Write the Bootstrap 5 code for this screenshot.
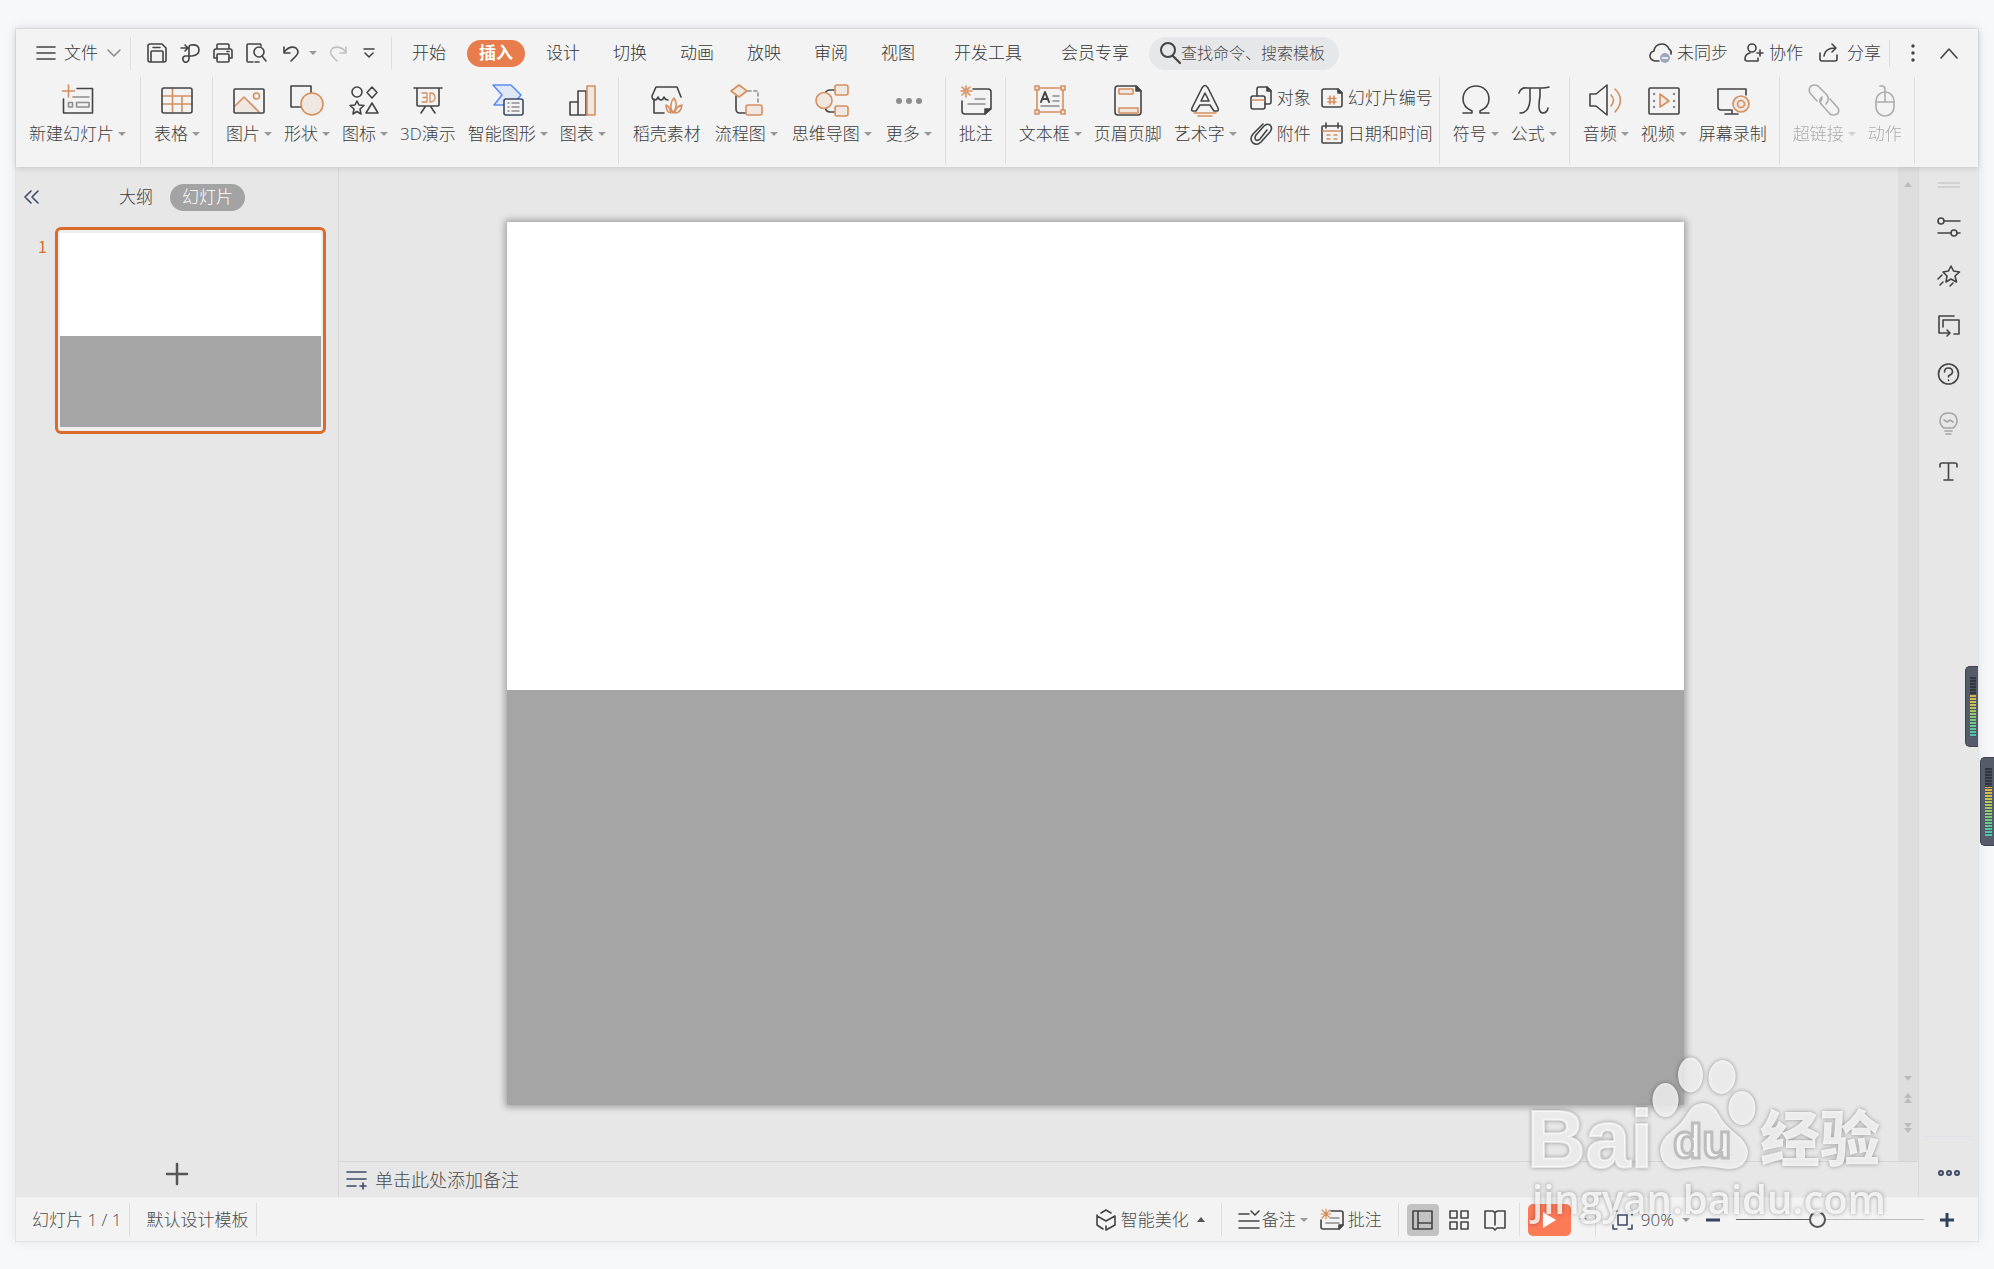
<!DOCTYPE html>
<html lang="zh-CN">
<head>
<meta charset="utf-8">
<meta name="viewport" content="width=device-width, initial-scale=1">
<title>演示文稿</title>
<link href="https://cdn.jsdelivr.net/npm/bootstrap@5.3.0/dist/css/bootstrap.min.css" rel="stylesheet">
<style>
:root{--ink:#3c3c3c;--line:#dedede;--bar:#f3f3f3;--pane:#e7e7e7;--accent:#e87c4c;--o:#d4905f;--navy:#3d4a66}
body{font-family:"Open Sans","Noto Sans CJK SC",sans-serif;font-weight:300;font-size:17px;line-height:24px;color:var(--ink);background:#f7f8fa;min-height:100vh;padding:28px 15px 27px;position:relative}
.app{border:1px solid #e2e3e4;box-shadow:0 0 12px rgba(0,0,0,.08);background:var(--pane);position:relative}
svg{display:block;flex:none;overflow:visible}
.ic{fill:none;stroke:#444;stroke-width:1.6;stroke-linecap:round;stroke-linejoin:round}
.ic .o{stroke:var(--o)} .ic .of{stroke:var(--o);fill:#f1e7e1} .ic .g{stroke:#8d8d8d} .ic .k{fill:#444}
.plain{--bs-btn-padding-x:0;--bs-btn-padding-y:0;--bs-btn-border-width:0;--bs-btn-color:var(--ink);--bs-btn-line-height:24px;--bs-btn-font-size:17px;--bs-btn-font-weight:300;--bs-btn-border-radius:4px;--bs-btn-hover-color:#222;display:flex;align-items:center;white-space:nowrap}
.caret{width:0;height:0;border:4px solid transparent;border-top-color:#999;border-bottom-width:0;flex:none}
.caret.up{border:4px solid transparent;border-bottom:5px solid #555;border-top:0}
.vline{width:1px;background:var(--line);flex:none}
.head{background:var(--bar);box-shadow:0 1px 6px rgba(0,0,0,.14);position:relative;z-index:2}
.toprow{height:48px}
.quick{gap:12px}
.tabs{gap:9px}
.tabs .nav-link{padding:1px 12px 2px;color:#333;border-radius:14px;line-height:24px;white-space:nowrap}
.tabs .nav-link.active{background:var(--accent);color:#fff;font-weight:700}
.tabs .wide{margin-left:6px}
.finder{background:#e6e7e9;border-radius:17px;height:33px;width:190px;padding-left:10px}
.finder input{font-size:16px;font-weight:300;width:156px;padding:0;border:0;background:none;min-width:0;outline:0;color:#555}
input::placeholder{color:#4a4a4a;opacity:1}
.ribbon{height:90px}
.grp{display:flex;padding:0 6px 0 7px;border-right:1px solid var(--line);height:87px}
.tool{flex-direction:column;padding:7px 6px 0;gap:6px;justify-content:flex-start}
.roomy .tool{padding:7px 7px 0}
.tool>span{display:flex;align-items:center;gap:4px}
.off{opacity:.4}
.pair{display:grid;grid-template-columns:auto auto;column-gap:10px;align-content:start;padding:9px 0 0 7px;row-gap:12px}
.pair .btn{gap:5px}
.side{width:323px;border-right:1px solid #d8d8d8}
.sidehead{height:60px}
.collapse-box{width:103px;padding-left:8px}
.pill{background:#a3a3a3;color:#fff;border-radius:14px;padding:1px 12px 2px;margin-left:17px;--bs-btn-color:#fff}
.num{width:39px;color:#d96c2c;padding:7px 8px 0 0;text-align:right;font-family:"Noto Sans CJK SC",sans-serif;font-size:16px;font-weight:400}
.thumb{border:3px solid #d96b2b;border-radius:6px;padding:3px 2px 4px;aspect-ratio:271/207;margin-right:12px;background:#eee}
.top-half{background:#fff;flex:53}.low-half{background:#a5a5a5;flex:47}
.stage{padding:55px 214px 56px 168px}
.slide{box-shadow:0 0 7px 2px rgba(0,0,0,.32)}
.scroller{width:20px;background:#dedede;padding:15px 0 28px}
.scroller i{border:4px solid transparent;display:block}
.scroller .u{border-bottom:5px solid #bbb;border-top:0}.scroller .d{border-top:5px solid #bbb;border-bottom:0}
.memo{height:36px;border-top:1px solid #d5d5d5;padding-left:7px;gap:8px}
.memo input{background:none;border:0;padding:0;font-size:18px;font-weight:300;line-height:26px;outline:0}
.rail{width:60px;border-left:1px solid #d8d8d8;padding-top:15px}
.rail .lst{gap:27px;margin-top:28px}
.status{background:var(--bar);height:44px;color:#4a4a4a;border-top:1px solid #eee}
.status .plain{--bs-btn-color:#4a4a4a}
.status .vline,.toprow .vline{height:33px}
.toprow .shortline{height:27px}
.viewbtn{width:32px;height:32px;justify-content:center}
.viewbtn.on{background:#c2c2c2}
.playbtn{width:43px;height:32px;background:#fd7a57;justify-content:center;border-radius:5px}
.zoomer{appearance:none;width:188px;height:18px;background:linear-gradient(#bbb,#bbb) 0 50%/100% 1px no-repeat;margin:0}
.zoomer::-webkit-slider-runnable-track{height:18px;background:linear-gradient(#666,#666) 0 50%/73px 1px no-repeat}
.zoomer::-webkit-slider-thumb{appearance:none;width:17px;height:17px;border:2px solid #555;border-radius:50%;background:#f3f3f3}
.meter-a,.meter-b{position:absolute;right:0;background:#565b6a;border:1px solid #3e424e;border-right:0;border-radius:5px 0 0 5px;padding:10px 2px 9px 4px;z-index:3}
.meter-a{top:637px;width:13px;height:81px}
.meter-b{top:757px;width:14px;height:89px}
.lamp{height:100%;background:repeating-linear-gradient(transparent 0 2px,#4a5560 2px 3px),linear-gradient(#33363f 0 28%,#dfae45 28%,#c9c552 45%,#84c878 70%,#43c6b4)}
.brand{position:absolute;right:94px;bottom:29px;z-index:4;pointer-events:none;filter:drop-shadow(0 0 2px rgba(0,0,0,.45))}
</style>
</head>
<body class="d-flex flex-column">
<div class="app d-flex flex-column flex-grow-1">
<header class="head">
 <div class="toprow d-flex align-items-center">
  <button class="btn plain ms-3"><svg class="ic ms-1 me-2" width="20" height="16"><path d="M1 2h18M1 8h18M1 14h18"/></svg>文件<svg class="ic ms-2" width="16" height="10"><path class="g" d="M2 2l6 6 6-6"/></svg></button>
  <div class="vline ms-2 me-2"></div>
  <div class="quick d-flex align-items-center ms-2">
   <button class="btn plain" aria-label="保存"><svg class="ic" width="21" height="20"><path d="M3 1h12l4 4v12q0 2-2 2H3q-2 0-2-2V3q0-2 2-2zM4 19V9q0-1 1-1h10q1 0 1 1v10M6 4.500h7"/></svg></button>
   <button class="btn plain" aria-label="输出"><svg class="ic" width="21" height="20"><path d="M1 5h7M5 2l3 3-3 3M11 2q8-1 8 5 0 5-7 6H5q-3 1-2 4 1 3 4 2 2-1 2-3V5q0-3 2-3"/></svg></button>
   <button class="btn plain" aria-label="打印"><svg class="ic" width="21" height="20"><path d="M4 6V2q0-1 1-1h10q1 0 1 1v4M4 15H1V8q0-2 2-2h14q2 0 2 2v7h-3"/><rect x="4" y="11" width="12" height="8" rx="1"/><path d="M14 8.500h2"/></svg></button>
   <button class="btn plain" aria-label="打印预览"><svg class="ic" width="21" height="20"><path d="M7 19H2q-1 0-1-1V2q0-1 1-1h12q1 0 1 1v1"/><circle cx="13" cy="9" r="5"/><path d="M16 13l4 5M9 19h4"/></svg></button>
   <button class="btn plain" aria-label="撤销"><svg class="ic ms-1 me-2" width="18" height="18"><path d="M1 3v6h6M1 8q6-7 12-4 4 4 0 8l-5 5"/></svg><span class="caret"></span></button>
   <button class="btn plain" aria-label="恢复"><svg class="ic opacity-50" width="18" height="18"><path class="g" d="M17 3v6h-6M17 8Q11 1 4 4q-5 4 0 9l4 4"/></svg></button>
   <button class="btn plain ms-1" aria-label="更多"><svg class="ic" width="12" height="12"><path d="M1 2h10M2 6l4 4 4-4"/></svg></button>
  </div>
  <div class="vline ms-3 me-2"></div>
  <nav class="nav nav-pills tabs flex-nowrap">
   <button class="nav-link">开始</button><button class="nav-link active">插入</button><button class="nav-link">设计</button><button class="nav-link">切换</button><button class="nav-link">动画</button><button class="nav-link">放映</button><button class="nav-link">审阅</button><button class="nav-link">视图</button><button class="nav-link wide">开发工具</button><button class="nav-link wide">会员专享</button>
  </nav>
  <label class="finder d-flex align-items-center ms-2"><svg class="ic" width="22" height="22"><circle cx="9" cy="8" r="7" stroke-width="2"/><path d="M14 14l7 7" stroke-width="2.200"/></svg><input type="text" placeholder="查找命令、搜索模板" aria-label="查找命令、搜索模板"></label>
  <div class="d-flex align-items-center ms-auto">
   <button class="btn plain me-3"><svg class="ic me-1" width="24" height="20"><path d="M10 18H6q-5-1-5-5 0-4 4-5 1-7 8-7 5 0 7 5 3 2 2 5"/><circle cx="16" cy="15" r="5" fill="#9fa7bb" stroke="none"/><path d="M13.500 15h5" stroke="#fff"/></svg>未同步</button>
   <button class="btn plain me-3"><svg class="ic me-1" width="21" height="20"><circle cx="8" cy="5" r="4"/><path d="M6 10q-5 1-5 6 0 2 2 2h11v-3M13 10h6M16 7v6"/></svg>协作</button>
   <button class="btn plain"><svg class="ic me-2" width="20" height="20"><path d="M1 10v6q0 2 2 2h13q2 0 2-2v-4M5 13q1-8 11-8M13 1l4 4-4 4"/></svg>分享</button>
   <div class="vline shortline ms-2 me-3"></div>
   <button class="btn plain mx-1" aria-label="菜单"><svg width="6" height="20" fill="#444"><circle cx="3" cy="3" r="1.700"/><circle cx="3" cy="10" r="1.700"/><circle cx="3" cy="17" r="1.700"/></svg></button>
   <button class="btn plain ms-3 me-3" aria-label="收起"><svg class="ic mx-1" width="18" height="12"><path d="M1 11l8-9 8 9"/></svg></button>
  </div>
 </div>
 <div class="ribbon d-flex">
  <div class="grp pe-2"><button class="btn plain tool"><svg class="ic" width="32" height="32"><path d="M15 4.500h15.500V29h-29V15"/><path class="o" d="M6.500 1v12M.500 7h12"/><path class="g" d="M11 13h16M6.500 18.500h4V23h-4zM14.500 18.500H27V23H14.500z"/></svg><span>新建幻灯片<i class="caret"></i></span></button></div>
  <div class="grp"><button class="btn plain tool"><svg class="ic" width="32" height="32"><path class="o" d="M1 12h30M1 20h30M11.500 4v24M21 12v16"/><rect x="1" y="4" width="30" height="25" rx="2"/></svg><span>表格<i class="caret"></i></span></button></div>
  <div class="grp">
   <button class="btn plain tool"><svg class="ic" width="32" height="32"><path d="M1.500 23L11 13l15 15H2z" fill="#f1e7e1" stroke="none"/><path class="o" d="M2 22l9-9 15 15"/><circle class="o" cx="23.500" cy="12" r="3"/><rect x="1" y="5" width="30" height="24" rx="1"/></svg><span>图片<i class="caret"></i></span></button>
   <button class="btn plain tool"><svg class="ic" width="32" height="32"><path d="M0 2h20v21H0z"/><circle class="of" cx="21" cy="20" r="11"/></svg><span>形状<i class="caret"></i></span></button>
   <button class="btn plain tool"><svg class="ic" width="32" height="32"><circle cx="8" cy="8" r="5"/><path d="M23 3l5 5.500-5 5.500-5-5.500zM23 19l6 10H17zM8 17l2 4 5 .500-4 3.500 1 5-4-2.500L4 30l1-5-4-3.500 5-.500z"/></svg><span>图标<i class="caret"></i></span></button>
   <button class="btn plain tool"><svg class="ic" width="32" height="32"><path d="M2 4h28M5 4v17q0 1 1 1h20q1 0 1-1V4M13 23l-4 6M19 23l4 6"/><path class="o" d="M10 9h5v9h-5M11 13.500h4M18 9v9q5 0 5-4.500T18 9z" stroke-width="1.300"/></svg><span>3D演示</span></button>
   <button class="btn plain tool"><svg class="ic" width="32" height="32"><path d="M1 1h18l10 10-9 10H2l8-10z" stroke="#5b8def" fill="#dfe7f5"/><rect x="12" y="15" width="19" height="16" rx="2" stroke="#3d4a66" fill="#f3f3f3"/><path class="g" d="M16 19h1M20 19h7M16 23h1M20 23h7M16 27h1M20 27h7"/></svg><span>智能图形<i class="caret"></i></span></button>
   <button class="btn plain tool"><svg class="ic" width="32" height="32"><path d="M3 31V18h8v13zM11 31V7h8v24z"/><path class="of" d="M20 2h8v29h-8z"/></svg><span>图表<i class="caret"></i></span></button>
  </div>
  <div class="grp roomy">
   <button class="btn plain tool"><svg class="ic" width="32" height="32"><path d="M13 29H3V15M1 12l4-9h21l4 10M1 12q0 4 3 4 2 0 3-3 1 3 3 3t3-3q1 3 4 3"/><path class="o" d="M22 29q-5-8 1-15 5 7-1 15zM20 29q-5-1-5-8 4 2 5 8zM24 29q0-6 7-8-1 8-7 8z"/></svg><span>稻壳素材</span></button>
   <button class="btn plain tool"><svg class="ic" width="32" height="32"><path d="M6 12v13q0 4 4 4h6"/><path class="g" d="M18 7h10v13" stroke-dasharray="3 3"/><path class="of" d="M9 1l8 6-8 6-8-6zM18 21h12q2 0 2 2v6q0 2-2 2H18q-2 0-2-2v-6q0-2 2-2z"/></svg><span>流程图<i class="caret"></i></span></button>
   <button class="btn plain tool"><svg class="ic" width="32" height="32"><path d="M9 10q1-4 5-4h5M9 23q1 5 5 5h5"/><circle class="of" cx="8" cy="16.500" r="8"/><rect class="of" x="19" y="1" width="13" height="10" rx="2"/><rect class="of" x="19" y="22" width="13" height="10" rx="2"/></svg><span>思维导图<i class="caret"></i></span></button>
   <button class="btn plain tool"><svg width="32" height="32" fill="#8d8d8d"><circle cx="6" cy="17" r="3"/><circle cx="16" cy="17" r="3"/><circle cx="26" cy="17" r="3"/></svg><span>更多<i class="caret"></i></span></button>
  </div>
  <div class="grp"><button class="btn plain tool"><svg class="ic" width="32" height="32"><path d="M13 5h15q3 0 3 3v16l-6 6H5q-3 0-3-3V17"/><path class="k" d="M25 30v-5h6z"/><path class="o" d="M6 2v4M6 9v4M1 7h4M8 7h4M2 3l3 3M7 8l3 3M10 3L7 6M5 8l-3 3"/><path class="g" d="M15 15h10M8 20h17"/></svg><span>批注</span></button></div>
  <div class="grp">
   <button class="btn plain tool"><svg class="ic" width="32" height="32"><path class="o" d="M3 4h26v24H3z"/><path class="of" d="M1 2h4v4H1zM27 2h4v4h-4zM1 26h4v4H1zM27 26h4v4h-4z"/><path d="M7 18l4-10 4 10M8 15h6" stroke-width="2"/><path class="g" d="M19 12h6M19 17h6M7 22h18"/></svg><span>文本框<i class="caret"></i></span></button>
   <button class="btn plain tool"><svg class="ic" width="32" height="32"><path d="M6 2h18l5 5v21q0 3-3 3H6q-3 0-3-3V5q0-3 3-3z"/><path class="k" d="M24 2v5h5z"/><path class="of" d="M7 5h14v5H7zM7 24h19v5H7z"/></svg><span>页眉页脚</span></button>
   <button class="btn plain tool"><svg class="ic" width="32" height="32"><path d="M13 4q3-5 6 0l10 20q1 3-1 3h-3l-4-6H11l-4 6H4q-2 0-1-3zM16 9l4 8h-8z"/><path class="o" d="M5 29h22M9 32h14"/></svg><span>艺术字<i class="caret"></i></span></button>
   <div class="pair">
    <button class="btn plain"><svg class="ic" width="22" height="24"><path d="M7 10V3q0-2 2-2h8l4 4v11q0 2-2 2h-4"/><path class="k" d="M17 1v4h4z"/><rect x="1" y="10" width="14" height="13" rx="2"/><path class="o" d="M2 14h12"/></svg>对象</button>
    <button class="btn plain"><svg class="ic" width="22" height="24"><path d="M3 3h14l4 4v12q0 2-2 2H3q-2 0-2-2V5q0-2 2-2z"/><path class="k" d="M17 3v4h4z"/><path class="o" d="M9 10v8M13 10v8M7 12.500h8M7 16h8"/></svg>幻灯片编号</button>
    <button class="btn plain"><svg class="ic" width="22" height="24"><path d="M13 2L3 12q-4 5 0 9 4 3 8-1L20 10q3-4 0-7-3-2-6 1L6 13q-2 3 0 5 2 1 4-1l7-9"/></svg>附件</button>
    <button class="btn plain"><svg class="ic" width="22" height="24"><rect x="1" y="4" width="20" height="17" rx="1"/><path d="M5 1v5M17 1v5"/><path class="o" d="M2 9h18M6 13h3M13 13h3M6 17h3M13 17h3"/></svg>日期和时间</button>
   </div>
  </div>
  <div class="grp">
   <button class="btn plain tool"><svg class="ic" width="32" height="32"><path d="M3 29h9v-2C5 24 3 20 3 15 3 7 9 2 16 2s13 5 13 13c0 5-2 9-9 12v2h9"/></svg><span>符号<i class="caret"></i></span></button>
   <button class="btn plain tool"><svg class="ic" width="32" height="32"><path d="M1 9q2-6 8-5h15q4 0 7-1M12 4v12q-1 13-10 13M22 4v8q-3 17 3 17 4 0 5-5"/></svg><span>公式<i class="caret"></i></span></button>
  </div>
  <div class="grp">
   <button class="btn plain tool"><svg class="ic" width="32" height="32"><path d="M0 10h6L17 1v30L6 22H0z"/><path class="o" d="M21 11q5 5 0 11M25 5q11 11 0 23"/></svg><span>音频<i class="caret"></i></span></button>
   <button class="btn plain tool"><svg class="ic" width="32" height="32"><rect x="1" y="4" width="30" height="26" rx="1"/><path class="of" d="M12 10l9 7-9 6z"/><path class="g" stroke-width="2.500" d="M6 10h.1M6 17h.1M6 23h.1M26 10h.1M26 17h.1M26 23h.1"/></svg><span>视频<i class="caret"></i></span></button>
   <button class="btn plain tool"><svg class="ic" width="32" height="32"><path d="M14 26H4q-3 0-3-3V5h28v6M8 30h13M15 26v4"/><circle class="of" cx="24" cy="20" r="8"/><circle class="o" cx="24" cy="20" r="3.500"/></svg><span>屏幕录制</span></button>
  </div>
  <div class="grp">
   <button class="btn plain tool off"><svg class="ic" width="32" height="32"><path d="M9 17l-7-8q-2-4 1-7 4-2 7 0l9 9q3 5-1 9M13 20q-3-4 1-7M22 15l8 9q2 4-1 6-4 2-7 0l-8-9q-3-3 0-6"/></svg><span>超链接<i class="caret"></i></span></button>
   <button class="btn plain tool off"><svg class="ic" width="32" height="32"><rect x="7" y="8" width="18" height="24" rx="9"/><path d="M7 18h18M16 18V5q0-3-3-3h-2"/></svg><span>动作</span></button>
  </div>
 </div>
</header>
<main class="d-flex flex-grow-1">
 <aside class="side d-flex flex-column flex-shrink-0">
  <div class="sidehead d-flex align-items-center">
   <div class="collapse-box"><button class="btn plain" aria-label="折叠"><svg class="ic" width="16" height="14"><path stroke="#3d4a66" d="M7 1L1 7l6 6M14 1L8 7l6 6"/></svg></button></div>
   <button class="btn plain">大纲</button><button class="btn plain pill">幻灯片</button>
  </div>
  <div class="d-flex"><div class="num">1</div><div class="thumb d-flex flex-column flex-grow-1"><div class="top-half"></div><div class="low-half"></div></div></div>
  <button class="btn plain mx-auto mt-auto mb-2" aria-label="新建幻灯片"><svg class="ic mb-1" width="22" height="22"><path stroke-width="2.500" d="M11 1v20M1 11h20" stroke="#555"/></svg></button>
 </aside>
 <section class="d-flex flex-column flex-grow-1">
  <div class="d-flex flex-grow-1">
   <div class="stage d-flex flex-grow-1"><div class="slide d-flex flex-column flex-grow-1"><div class="top-half"></div><div class="low-half"></div></div></div>
   <div class="scroller d-flex flex-column align-items-center"><i class="u"></i><i class="d mt-auto mb-2"></i><i class="u mt-1"></i><i class="u mb-3"></i><i class="d mt-1"></i><i class="d"></i></div>
  </div>
  <div class="memo d-flex align-items-center"><svg class="ic" width="21" height="18"><path stroke="#3d4a66" d="M1 1h19M1 8h19M1 15h9M17 12v6M14 15h6"/></svg><input type="text" class="flex-grow-1" placeholder="单击此处添加备注" aria-label="备注"></div>
 </section>
 <aside class="rail d-flex flex-column align-items-center">
  <svg width="22" height="6" stroke="#bbb" fill="none"><path d="M0 1h22M0 5h22"/></svg>
  <div class="lst d-flex flex-column">
   <button class="btn plain" aria-label="属性"><svg class="ic" width="22" height="22"><circle cx="3" cy="5" r="3"/><circle cx="16" cy="17" r="3"/><path d="M6 5h16M0 17h13M19 17h3"/></svg></button>
   <button class="btn plain" aria-label="动画"><svg class="ic" width="22" height="22"><path d="M13 1l2.500 5 6 1-4.500 4 1.500 6L13 14l-5 3 1-6-4-4 5.500-1zM4 10l-4 4M5 17l-3 3M15 18l-3 3"/></svg></button>
   <button class="btn plain" aria-label="切换"><svg class="ic" width="22" height="22"><path d="M16 2H1v17h10M9 16l3 3-3 3M5 13V6h16v14h-5"/></svg></button>
   <button class="btn plain" aria-label="帮助"><svg class="ic" width="22" height="22"><circle cx="10.500" cy="11" r="10"/><path d="M6.500 9q0-4 4-4t4 4q0 2-4 4v1M10.500 17v.5"/></svg></button>
   <button class="btn plain off" aria-label="提示"><svg class="ic" width="22" height="22"><path d="M6 16q-4-3-4-7 0-8 8.500-8T19 9q0 4-4 7zM7 19h7M8 22h5M6 8l3 2 3-2 3 2"/></svg></button>
   <button class="btn plain" aria-label="文字"><svg class="ic" width="22" height="22"><path d="M2 6V4q0-2 2-2h13q2 0 2 2v2M10.500 2v17M6 19h9"/></svg></button>
  </div>
  <div class="w-100 px-1 mt-auto pb-3"><div class="border-top pb-4"></div>
  <button class="btn plain mx-auto mt-2 mb-1" aria-label="更多"><svg class="ic" width="22" height="8"><g stroke="#3d4a66" stroke-width="2"><circle cx="3" cy="4" r="2"/><circle cx="11" cy="4" r="2"/><circle cx="19" cy="4" r="2"/></g></svg></button></div>
 </aside>
</main>
<footer class="status d-flex align-items-center">
 <span class="ms-3">幻灯片 1 / 1</span><div class="vline ms-2 me-2"></div><span class="ms-2">默认设计模板</span><div class="vline ms-2"></div>
 <div class="d-flex align-items-center ms-auto">
  <button class="btn plain"><svg class="ic me-1" width="21" height="22"><path d="M5 4l5-3 5 3M1 6v10l6 4M1 7l9 5 9-5v9l-9 5v-4"/></svg>智能美化<i class="caret up mx-2"></i></button>
  <div class="vline ms-2 me-3"></div>
  <button class="btn plain me-2"><svg class="ic" width="24" height="20"><path d="M1 4h10M1 11h20M1 18h20M13 1l4 4 4-4"/></svg>备注<i class="caret mx-1"></i></button>
  <button class="btn plain"><svg class="ic me-1" width="24" height="22"><path d="M11 2h10q2 0 2 2v12l-4 4H3q-2 0-2-2v-7"/><path class="k" d="M19 20v-4h4z"/><path class="o" d="M6 0v10M1 5h10M2 1l8 8M10 1L2 9" stroke-width="1.200"/><path class="g" d="M11 9h8M6 14h13"/></svg>批注</button>
  <div class="vline ms-3 me-2"></div>
  <button class="btn plain viewbtn on" aria-label="普通"><svg class="ic" width="21" height="20"><path d="M1 1h19v18H1zM6 1v18M6 13h14"/></svg></button>
  <button class="btn plain viewbtn ms-1" aria-label="浏览"><svg class="ic" width="20" height="20"><path d="M1 1h7v7H1zM12 1h7v7h-7zM1 12h7v7H1zM12 12h7v7h-7z"/></svg></button>
  <button class="btn plain viewbtn ms-1" aria-label="阅读"><svg class="ic" width="22" height="20"><path d="M11 3Q10 1 8 1H1v17h8l2 2 2-2h8V1h-7q-2 0-3 2v12"/></svg></button>
  <div class="vline mx-2"></div>
  <button class="btn plain playbtn" aria-label="放映"><svg width="14" height="18"><path d="M1 1l13 8-13 8z" fill="#fff"/></svg></button><i class="caret mx-2"></i>
  <div class="vline me-3"></div>
  <button class="btn plain" aria-label="适应"><svg class="ic" width="21" height="20"><path stroke="#3d4a66" d="M1 5V1h4M16 1h4v4M20 15v4h-4M5 19H1v-4M6 5h9v10H6z"/></svg></button>
  <button class="btn plain ms-2">90%<i class="caret ms-2"></i></button>
  <button class="btn plain mx-3" aria-label="缩小"><svg width="14" height="14" stroke="#34435c" stroke-width="3"><path d="M0 7h14"/></svg></button>
  <input type="range" class="zoomer" min="0" max="1000" value="427" aria-label="缩放">
  <button class="btn plain mx-3 pe-1" aria-label="放大"><svg class="me-1" width="14" height="14" stroke="#34435c" stroke-width="3"><path d="M0 7h14M7 0v14"/></svg></button>
 </div>
</footer>
<div class="meter-a"><div class="lamp"></div></div>
</div>
<div class="meter-b"><div class="lamp"></div></div>
<svg class="brand" width="380" height="190" fill="#fff" fill-opacity=".8">
 <text x="7" y="117" font-family="Liberation Sans" font-weight="700" font-size="81" stroke="#fff" stroke-opacity=".6" stroke-width="2">Bai</text>
 <ellipse cx="145.500" cy="50" rx="13" ry="17"/><ellipse cx="170.500" cy="25" rx="12.500" ry="17.500"/><ellipse cx="202" cy="27" rx="13.500" ry="17" transform="rotate(8 202 27)"/><ellipse cx="222" cy="58" rx="13.500" ry="17"/>
 <path d="M183 53q10 0 16 12 6 10 16 18 12 9 13 19-1 17-20 17-14-2-25-3-11 1-25 3-16 0-18-18 0-11 12-20 10-8 15-17 6-11 16-11z"/>
 <text x="153" y="108" font-family="Liberation Sans" font-weight="700" font-size="48" fill="#f4f4f4" fill-opacity="1" stroke="#bdbdbd" stroke-width="3">du</text>
 <text x="240" y="111" font-family="Noto Sans CJK SC" font-weight="900" font-size="60">经验</text>
 <text x="12" y="164" font-family="Open Sans" font-weight="600" font-size="40">jingyan.baidu.com</text>
</svg>
<script src="https://cdn.jsdelivr.net/npm/bootstrap@5.3.0/dist/js/bootstrap.bundle.min.js"></script>
</body>
</html>
